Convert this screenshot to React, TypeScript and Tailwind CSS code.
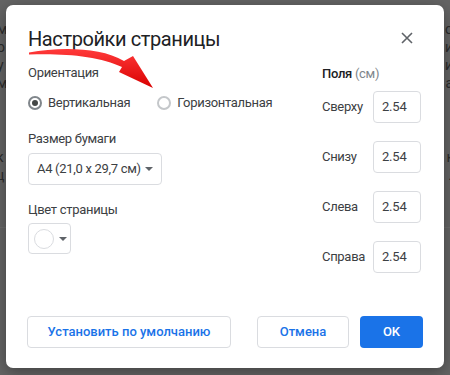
import React from "react";

const font = { fontFamily: "Roboto, 'Noto Sans', sans-serif" };

function Radio({ checked, label }: { checked: boolean; label: string }) {
  return (
    <div className="flex items-center gap-[6px]">
      <div
        className={`w-[14px] h-[14px] rounded-full border-2 flex items-center justify-center ${
          checked ? "border-[#80868b]" : "border-[#c4c7ca]"
        }`}
      >
        {checked && <div className="w-[6px] h-[6px] rounded-full bg-[#444746]" />}
      </div>
      <span className="text-[13px] leading-[20px] tracking-[-0.3px] text-[#3c4043]">{label}</span>
    </div>
  );
}

function MarginRow({ label }: { label: string }) {
  return (
    <div className="flex items-center justify-between">
      <span className="text-[13px] leading-[20px] tracking-[-0.3px] text-[#3c4043]">{label}</span>
      <div className="w-[48px] h-[32px] border border-[#dadce0] rounded-[4px] flex items-center pl-[8px] text-[13px] tracking-[-0.2px] text-[#3c4043]">
        2.54
      </div>
    </div>
  );
}

const arrowDown =
  "w-0 h-0 border-l-[4px] border-r-[4px] border-t-[4px] border-l-transparent border-r-transparent border-t-[#5f6368]";

export default function App() {
  const leftLetters = ["м", "о", "у", "м"];
  const rightLetters = ["о", "и", "и", "а"];
  return (
    <div className="relative w-[450px] h-[375px] overflow-hidden bg-[#646464]" style={font}>
      {/* page behind overlay */}
      <div className="pt-[20px] flex flex-col text-[14px] leading-[18px] text-[#2b2b2b]">
        {leftLetters.map((l, i) => (
          <div key={i} className="flex justify-between">
            <span className="-ml-[3px]">{l}</span>
            <span className="-mr-[3px]">{rightLetters[i]}</span>
          </div>
        ))}
        <div className="h-[56px]" />
        <div className="flex justify-between">
          <span className="-ml-[4px]">к</span>
          <span className="-mr-[4px]">к</span>
        </div>
        <div className="flex justify-between">
          <span className="-ml-[4px]">ц</span>
          <span className="-mr-[2px]">.</span>
        </div>
        <div className="h-[43px]" />
        <div className="h-px bg-[#6c6c6c]" />
      </div>

      {/* dialog */}
      <div className="absolute left-[6px] top-[5px] w-[438px] h-[363px] bg-white rounded-[7px] shadow-[0_4px_16px_rgba(0,0,0,0.35)] flex flex-col pl-[22px] pr-[23px] pt-[20px] pb-[20px]">
        <div className="flex items-start justify-between">
          <div className="text-[20px] leading-[28px] tracking-[-0.4px] text-[#202124]">Настройки страницы</div>
          <svg width="12" height="12" viewBox="0 0 12 12" className="mt-[7px] mr-[8px]">
            <path d="M1 1 L11 11 M11 1 L1 11" stroke="#5f6368" strokeWidth="1.6" />
          </svg>
        </div>

        <div className="flex justify-between mt-[10px]">
          {/* left column */}
          <div className="flex flex-col">
            <div className="text-[13px] leading-[20px] tracking-[-0.3px] text-[#3c4043]">Ориентация</div>
            <div className="flex items-center gap-[27px] mt-[10px]">
              <Radio checked label="Вертикальная" />
              <Radio checked={false} label="Горизонтальная" />
            </div>
            <div className="text-[13px] leading-[20px] tracking-[-0.3px] text-[#3c4043] mt-[16px]">Размер бумаги</div>
            <div className="mt-[4px] w-[134px] h-[32px] border border-[#dadce0] rounded-[4px] flex items-center justify-between pl-[8px] pr-[8px] text-[13px] tracking-[-0.3px] text-[#3c4043] whitespace-nowrap">
              <span>А4 (21,0 x 29,7 см)</span>
              <div className={arrowDown} />
            </div>
            <div className="text-[13px] leading-[20px] tracking-[-0.3px] text-[#3c4043] mt-[15px]">Цвет страницы</div>
            <div className="mt-[3px] w-[43px] h-[31px] border border-[#dadce0] rounded-[4px] flex items-center pl-[5px] gap-[5px]">
              <div className="w-[20px] h-[20px] rounded-full border border-[#dadce0]" />
              <div className={arrowDown} />
            </div>
          </div>

          {/* right column */}
          <div className="flex flex-col w-[99px] pt-[1px]">
            <div className="text-[13px] leading-[20px] tracking-[-0.3px]">
              <span className="font-medium text-[#202124]">Поля</span>{" "}
              <span className="text-[#80868b]">(см)</span>
            </div>
            <div className="flex flex-col gap-[18px] mt-[7px]">
              <MarginRow label="Сверху" />
              <MarginRow label="Снизу" />
              <MarginRow label="Слева" />
              <MarginRow label="Справа" />
            </div>
          </div>
        </div>

        <div className="flex-1" />

        <div className="flex items-center justify-between -ml-[1px] -mr-[2px]">
          <button className="w-[204px] h-[32px] border border-[#dadce0] rounded-[4px] text-[13px] font-medium text-[#1a73e8] bg-white">
            Установить по умолчанию
          </button>
          <div className="flex gap-[11px]">
            <button className="w-[92px] h-[32px] border border-[#dadce0] rounded-[4px] text-[13px] font-medium text-[#1a73e8] bg-white">
              Отмена
            </button>
            <button className="w-[63px] h-[32px] rounded-[4px] text-[13px] font-medium text-white bg-[#1a73e8]">
              OK
            </button>
          </div>
        </div>
      </div>

      {/* red annotation arrow */}
      <svg className="absolute left-0 top-0 pointer-events-none" width="450" height="375" viewBox="0 0 450 375">
        <defs>
          <linearGradient id="ag" x1="0" y1="0" x2="0" y2="1">
            <stop offset="0" stopColor="#ff3a3a" />
            <stop offset="1" stopColor="#d90000" />
          </linearGradient>
        </defs>
        <path
          d="M29 52.5 C60 47 100 47 124 61 L133 56 L153 88 L119 72 L122 67 C100 56 62 53 29 54.5 Z"
          fill="url(#ag)"
        />
      </svg>
    </div>
  );
}
